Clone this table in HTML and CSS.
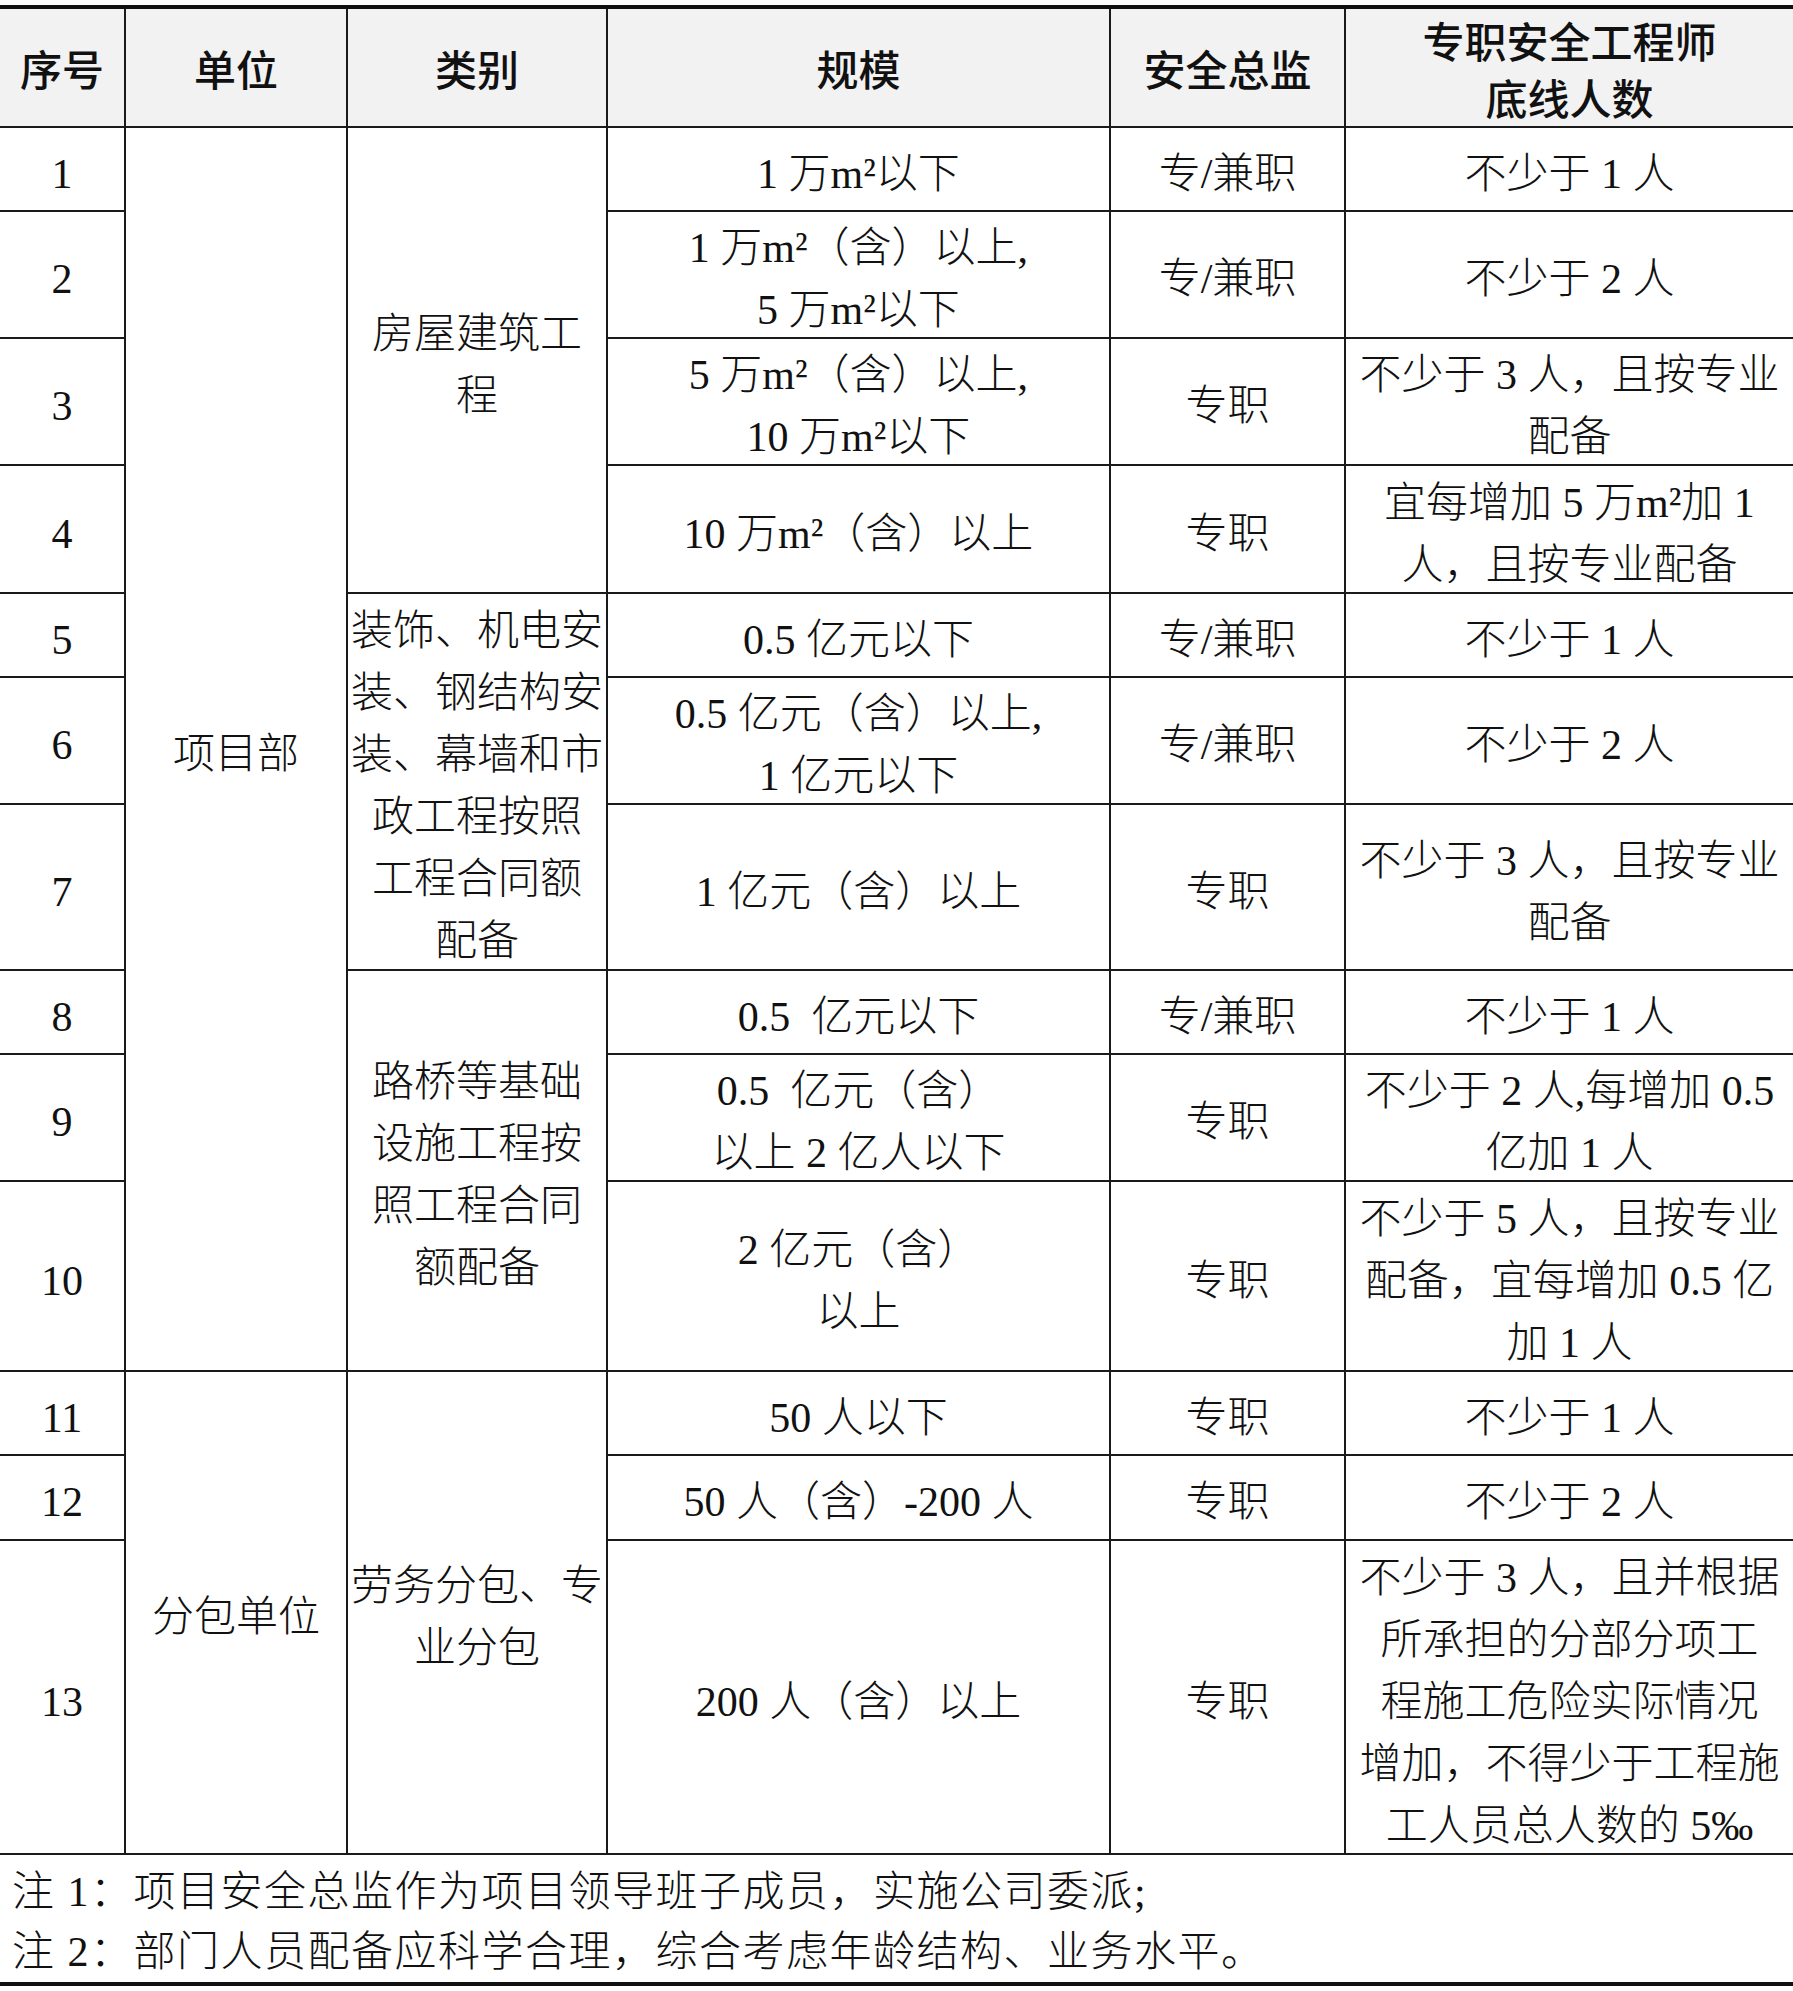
FILE: index.html
```html
<!DOCTYPE html>
<html lang="zh-CN">
<head>
<meta charset="utf-8">
<title>安全总监及专职安全工程师配备</title>
<link rel="stylesheet" href="styles.css">
</head>
<body>
<div class="sheet">
  <div class="grid">
    <div class="c h">序号</div>
    <div class="c h">单位</div>
    <div class="c h">类别</div>
    <div class="c h">规模</div>
    <div class="c h">安全总监</div>
    <div class="c h last">专职安全工程师<br>底线人数</div>

    <div class="c">1</div>
    <div class="c span10">项目部</div>
    <div class="c span4">房屋建筑工<br>程</div>
    <div class="c">1 万m²以下</div>
    <div class="c">专/兼职</div>
    <div class="c last">不少于 1 人</div>

    <div class="c">2</div>
    <div class="c">1 万m²（含）以上,<br>5 万m²以下</div>
    <div class="c">专/兼职</div>
    <div class="c last">不少于 2 人</div>

    <div class="c">3</div>
    <div class="c">5 万m²（含）以上,<br>10 万m²以下</div>
    <div class="c">专职</div>
    <div class="c last">不少于 3 人，且按专业<br>配备</div>

    <div class="c">4</div>
    <div class="c">10 万m²（含）以上</div>
    <div class="c">专职</div>
    <div class="c last">宜每增加 5 万m²加 1<br>人，且按专业配备</div>

    <div class="c">5</div>
    <div class="c span3">装饰、机电安<br>装、钢结构安<br>装、幕墙和市<br>政工程按照<br>工程合同额<br>配备</div>
    <div class="c">0.5 亿元以下</div>
    <div class="c">专/兼职</div>
    <div class="c last">不少于 1 人</div>

    <div class="c">6</div>
    <div class="c">0.5 亿元（含）以上,<br>1 亿元以下</div>
    <div class="c">专/兼职</div>
    <div class="c last">不少于 2 人</div>

    <div class="c">7</div>
    <div class="c">1 亿元（含）以上</div>
    <div class="c">专职</div>
    <div class="c last">不少于 3 人，且按专业<br>配备</div>

    <div class="c">8</div>
    <div class="c span3">路桥等基础<br>设施工程按<br>照工程合同<br>额配备</div>
    <div class="c">0.5&nbsp; 亿元以下</div>
    <div class="c">专/兼职</div>
    <div class="c last">不少于 1 人</div>

    <div class="c">9</div>
    <div class="c">0.5&nbsp; 亿元（含）<br>以上 2 亿人以下</div>
    <div class="c">专职</div>
    <div class="c last">不少于 2 人,每增加 0.5<br>亿加 1 人</div>

    <div class="c">10</div>
    <div class="c">2 亿元（含）<br>以上</div>
    <div class="c">专职</div>
    <div class="c last">不少于 5 人，且按专业<br>配备，宜每增加 0.5 亿<br>加 1 人</div>

    <div class="c">11</div>
    <div class="c span3">分包单位</div>
    <div class="c span3">劳务分包、专<br>业分包</div>
    <div class="c">50 人以下</div>
    <div class="c">专职</div>
    <div class="c last">不少于 1 人</div>

    <div class="c">12</div>
    <div class="c">50 人（含）-200 人</div>
    <div class="c">专职</div>
    <div class="c last">不少于 2 人</div>

    <div class="c">13</div>
    <div class="c">200 人（含）以上</div>
    <div class="c">专职</div>
    <div class="c last">不少于 3 人，且并根据<br>所承担的分部分项工<br>程施工危险实际情况<br>增加，不得少于工程施<br>工人员总人数的 5‰</div>
  </div>
  <div class="notes">
    <p class="note">注 1：项目安全总监作为项目领导班子成员，实施公司委派;</p>
    <p class="note">注 2：部门人员配备应科学合理，综合考虑年龄结构、业务水平。</p>
  </div>
</div>
</body>
</html>
```

FILE: styles.css
```css
html, body {
  margin: 0;
  padding: 0;
  background: #ffffff;
}

body {
  font-family: "Liberation Serif", "Noto Sans CJK SC", serif;
  color: #111111;
}

.sheet {
  width: 1793px;
  padding-top: 5px;
}

.grid {
  display: grid;
  grid-template-columns: 126px 222px 260px 503px 235px 447px;
  grid-template-rows: 119px 84px 127px 127px 128px 84px 127px 166px 84px 127px 190px 84px 85px 314px;
  border-top: 4px solid #111111;
}

.c {
  box-sizing: border-box;
  display: flex;
  align-items: center;
  justify-content: center;
  text-align: center;
  white-space: nowrap;
  padding-top: 9px;
  border-right: 2px solid #1a1a1a;
  border-bottom: 2px solid #1a1a1a;
  font-size: 42px;
  font-weight: 300;
  line-height: 62px;
}

.c.last {
  border-right: none;
}

.h {
  background: #f2f2f2;
  font-weight: 500;
  line-height: 57px;
  padding-top: 10px;
}

.span10 {
  grid-row: span 10;
}

.span4 {
  grid-row: span 4;
}

.span3 {
  grid-row: span 3;
}

.notes {
  border-bottom: 4px solid #111111;
  padding: 7px 0 0 12px;
}

.note {
  margin: 0;
  font-size: 42px;
  font-weight: 300;
  letter-spacing: 1.5px;
  line-height: 60px;
  white-space: nowrap;
}
```
